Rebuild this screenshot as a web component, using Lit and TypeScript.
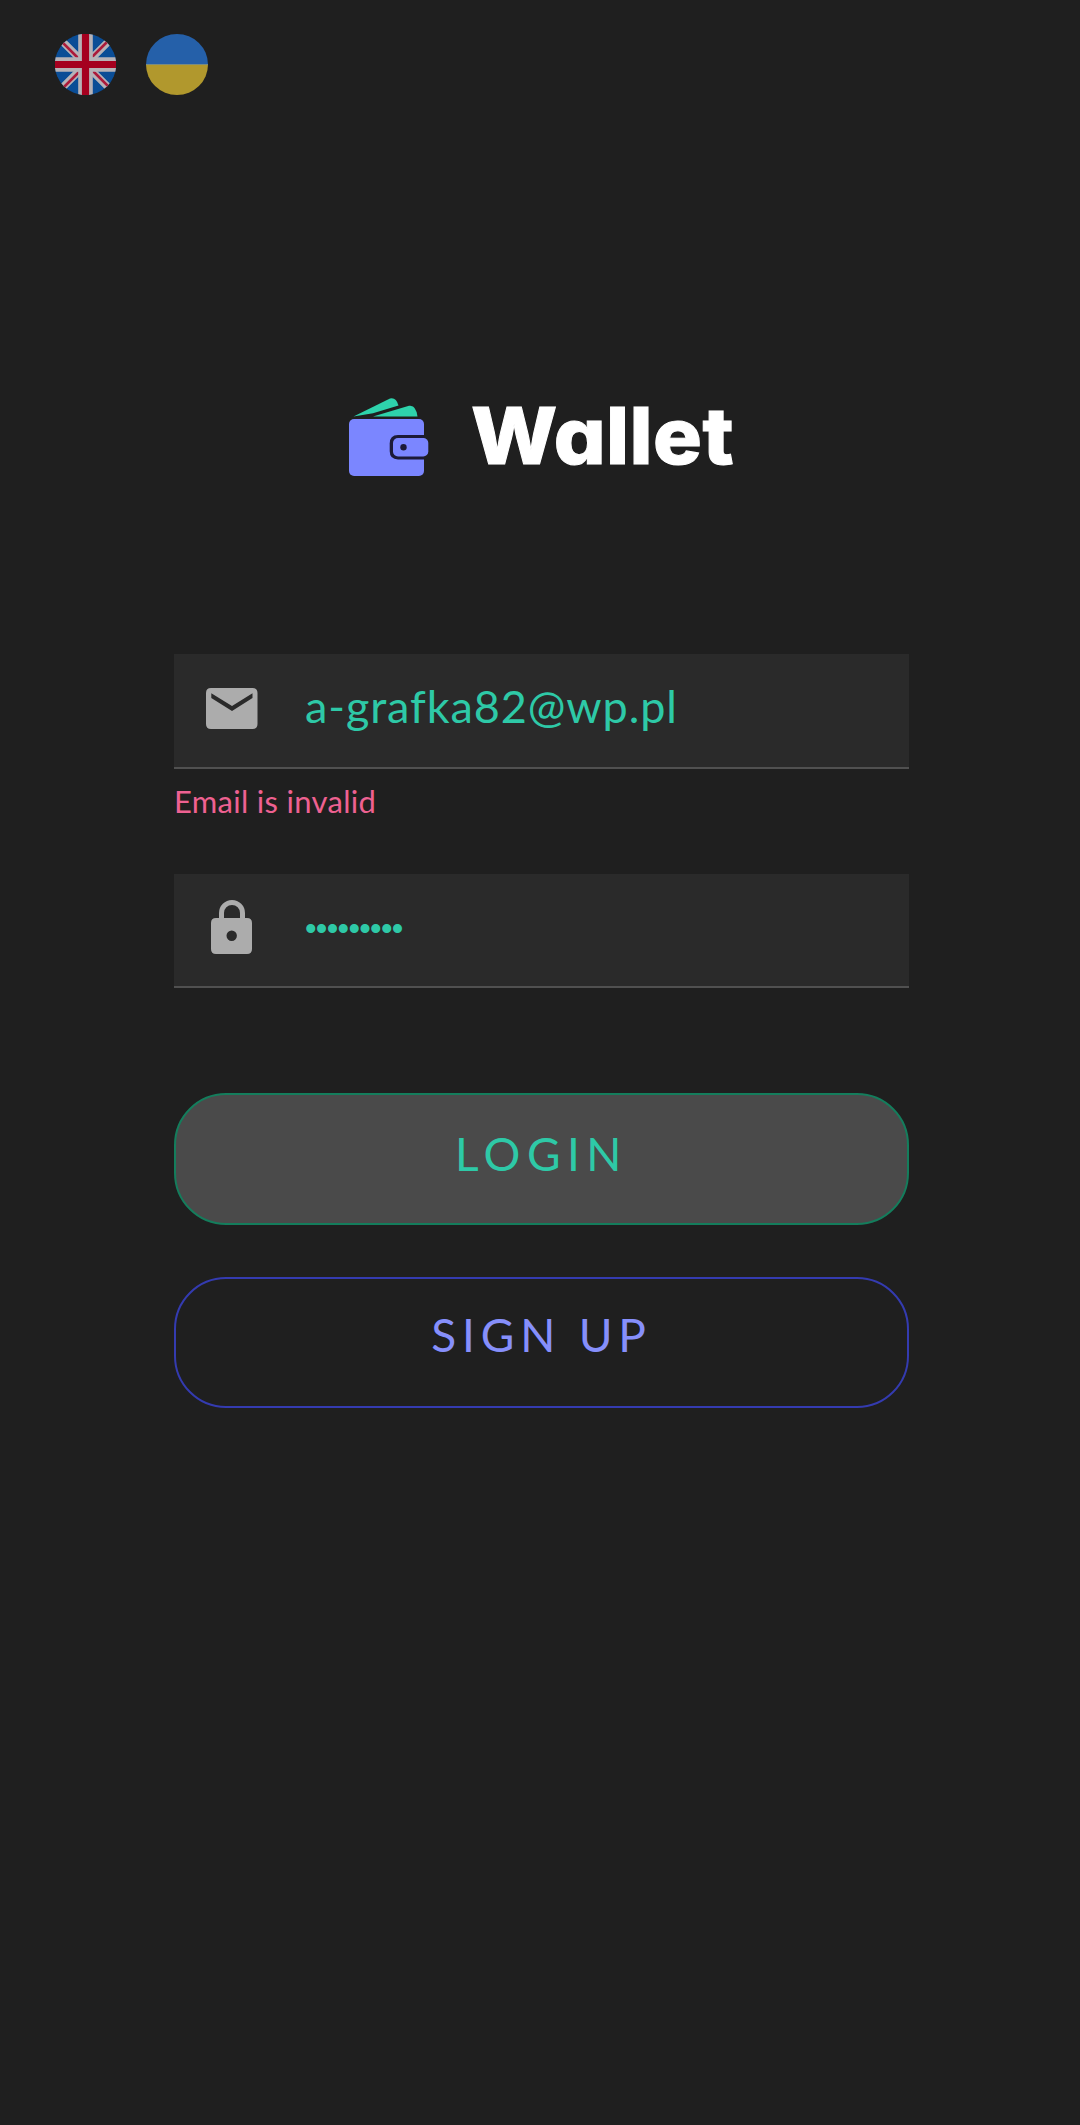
import { LitElement, html, css, svg } from "lit";
import { customElement } from "lit/decorators.js";

const ukFlag = svg`
  <svg class="flag" viewBox="0 0 61 61">
    <defs><clipPath id="disc"><circle cx="30.5" cy="30.5" r="30.7"/></clipPath></defs>
    <g clip-path="url(#disc)">
      <rect width="61" height="61" fill="#0a4d96"/>
      <path d="M0 0L61 61M61 0L0 61" stroke="#b6b2b6" stroke-width="7.4"/>
      <path d="M0 1L30 31M61 60L31 30M60 0L30 30M1 61L31 31" stroke="#ab1a3a" stroke-width="2.600"/>
      <path d="M30.5 0V61M0 30.5H61" stroke="#b6b2b6" stroke-width="14.6"/>
      <path d="M30.5 0V61M0 30.5H61" stroke="#a5001f" stroke-width="7.2"/>
    </g>
  </svg>`;

const uaFlag = svg`
  <svg class="flag ua" viewBox="0 0 62 61">
    <path d="M0 30.5A31 30.5 0 0 1 62 30.5Z" fill="#2560a9"/>
    <path d="M0 30.5A31 30.5 0 0 0 62 30.5Z" fill="#b1982d"/>
    <path d="M0 30.5H62" stroke="#7a8c80" stroke-width="1"/>
  </svg>`;

const walletIcon = svg`
  <svg class="wallet" viewBox="0 0 80 80">
    <path d="M4.5 18.6L41 .6Q47-1 49.500 7.500L24 15.200Z" fill="#2ed3ac"/>
    <path d="M24 18.600L60 7.800Q67 6.500 68.500 18.600Z" fill="#2ed3ac"/>
    <rect y="21" width="75" height="57" rx="5" fill="#7b86ff"/>
    <path d="M75 37H49Q40.700 37 40.700 45.500V53Q40.700 61.400 49 61.400H75Z" fill="#1c1a36"/>
    <rect x="44" y="40" width="35.300" height="18.500" rx="5" fill="#7b86ff"/>
    <circle cx="54.500" cy="49.300" r="3.200" fill="#1c1a36"/>
  </svg>`;

const mailIcon = svg`
  <svg class="icon" viewBox="0 0 52 54"><path fill="#acacac" fill-rule="evenodd" d="M5 7H46.500Q51.500 7 51.500 12V43Q51.500 48 46.500 48H5Q0 48 0 43V12Q0 7 5 7ZM5.300 12.300V17L26 30L46.500 17V12.300L26 25Z"/></svg>`;

const lockIcon = svg`
  <svg class="icon lock" viewBox="0 0 52 54"><path fill="none" stroke="#acacac" stroke-width="5" d="M15.500 20V13A10.500 10.500 0 0 1 36.500 13V20"/><path fill="#acacac" fill-rule="evenodd" d="M10 18H41Q46 18 46 23V49Q46 54 41 54H10Q5 54 5 49V23Q5 18 10 18ZM25.700 30.500A5.200 5.200 0 1 0 25.700 40.900A5.200 5.200 0 1 0 25.700 30.500Z"/></svg>`;

@customElement("app-root")
export class AppRoot extends LitElement {
  static styles = css`
    :host { display: block; }
    .page { box-sizing: border-box; height: 2125px; background: #1f1f1f; font-family: Lato, "Open Sans", sans-serif; display: flex; flex-direction: column; }
    .langs { display: flex; gap: 30px; padding: 34px 0 0 55px; height: 61px; }
    .flag { display: block; width: 61px; height: 61px; }
    .ua { width: 62px; }
    .brand { display: flex; align-items: center; margin: 293px 0 0 349px; height: 100px; }
    .wallet { width: 80px; height: 80px; margin-top: -1px; }
    .name { margin: 0 0 5px 42px; font: 800 78px/100px Inter, sans-serif; font-feature-settings: "cv11" 1; color: #fff; letter-spacing: 0.4px; -webkit-text-stroke: 1px #fff; transform: scaleX(1.045); transform-origin: left; white-space: nowrap; }
    .form { width: 735px; margin: 166px 0 0 174px; display: flex; flex-direction: column; }
    .field { box-sizing: border-box; height: 115px; background: #2a2a2a; border-bottom: 2px solid #505050; display: flex; align-items: center; padding-left: 32px; }
    .second { height: 114px; }
    .icon { width: 52px; height: 54px; flex: none; margin-bottom: 5px; }
    .lock { margin-bottom: 7px; }
    .value { margin-left: 47px; font-size: 45px; line-height: 60px; letter-spacing: 0.9px; color: #2ec9a7; white-space: nowrap; padding-bottom: 10px; }
    .dots { font-family: "Liberation Sans", sans-serif; font-size: 33px; letter-spacing: -0.7px; padding-bottom: 2px; }
    .error { font-size: 31px; line-height: 40px; height: 40px; letter-spacing: 0.3px; color: #ee6191; margin: 12px 0 53px 0; }
    .btn { box-sizing: border-box; width: 735px; border-radius: 52px; border: 2px solid #147d5c; background: #4a4a4a; color: #2ec9a7; font: 400 46px/60px Lato, sans-serif; letter-spacing: 6.5px; text-transform: uppercase; height: 132px; padding: 0 0 11px; margin: 105px 0 0; }
    .outline { height: 131px; background: transparent; border-color: #343bb0; color: #868ffb; letter-spacing: 5.8px; margin-top: 52px; padding-bottom: 15px; }
  `;

  render() {
    return html`<main class="page">
      <nav class="langs">${ukFlag}${uaFlag}</nav>
      <header class="brand">${walletIcon}<h1 class="name">Wallet</h1></header>
      <section class="form">
        <div class="field">${mailIcon}<span class="value">a-grafka82@wp.pl</span></div>
        <div class="error">Email is invalid</div>
        <div class="field second">${lockIcon}<span class="value dots">•••••••••</span></div>
        <button class="btn">Login</button>
        <button class="btn outline">Sign up</button>
      </section>
    </main>`;
  }
}
